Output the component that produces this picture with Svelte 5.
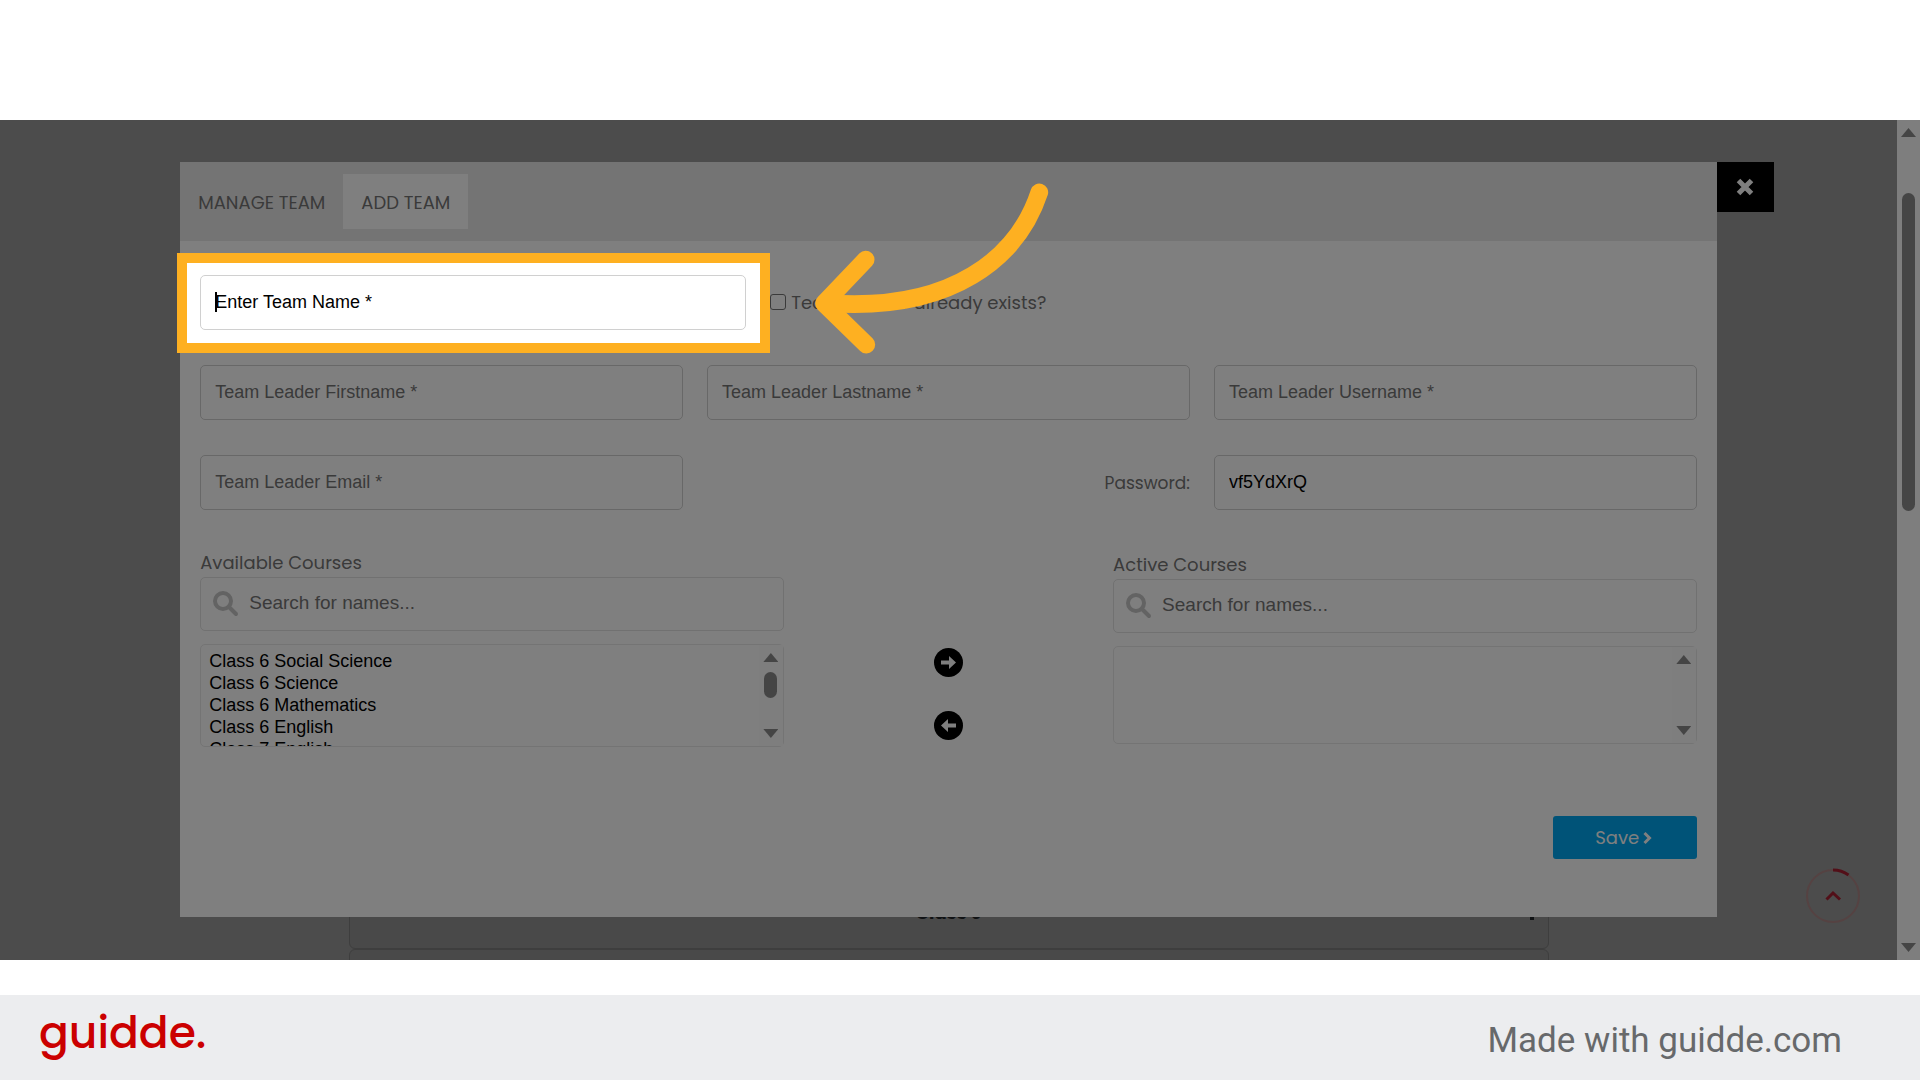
<script>
	let tab = 'add';
	let teamName = '';
	let leaderExists = false;
	let firstname = '';
	let lastname = '';
	let username = '';
	let email = '';
	let password = 'vf5YdXrQ';
	let searchAvailable = '';
	let searchActive = '';

	let available = [
		'Class 6 Social Science',
		'Class 6 Science',
		'Class 6 Mathematics',
		'Class 6 English',
		'Class 7 English',
		'Class 7 Science'
	];
	let active = [];
	let picked = [];
	let dropped = [];

	function match(list, term) {
		return list.filter((name) => name.toLowerCase().includes(term.toLowerCase()));
	}

	function add() {
		active = [...active, ...picked];
		available = available.filter((name) => !picked.includes(name));
		picked = [];
	}

	function remove() {
		available = [...available, ...dropped];
		active = active.filter((name) => !dropped.includes(name));
		dropped = [];
	}
</script>

<main>
	<section class="stage">
		<div class="page">
			<div class="accordion">
				<div class="item"><span>Class 9</span><i></i></div>
				<div class="item"></div>
			</div>

			<button class="to-top" aria-label="Back to top">
				<svg viewBox="0 0 56 56">
					<circle cx="28" cy="28" r="26" fill="none" stroke="#aa8484" stroke-width="2" />
					<path d="M28 2a26 26 0 0 1 15.500 5" fill="none" stroke="#a51f30" stroke-width="3" />
					<path d="M21.500 31.500l6.500-6.500l7 6.500" fill="none" stroke="#a51f30" stroke-width="3" />
				</svg>
			</button>

			<div class="modal">
				<nav>
					<button class:active={tab === 'manage'} on:click={() => (tab = 'manage')}>MANAGE TEAM</button>
					<button class:active={tab === 'add'} on:click={() => (tab = 'add')}>ADD TEAM</button>
				</nav>
				<button class="close" aria-label="Close">
					<svg viewBox="0 0 18 18">
						<path d="M2.500 2.500l13 13M15.500 2.500l-13 13" stroke="#fff" stroke-width="5" />
					</svg>
				</button>

				<form on:submit|preventDefault>
					<div class="name-row">
						<div class="team-name">
							<input type="text" placeholder="Enter Team Name *" aria-label="Enter Team Name" bind:value={teamName} />
							<span class="caret"></span>
							<div class="spotlight"></div>
							<svg class="pointer" viewBox="0 0 702 516">
								<path d="M673 28C610 220 415 390 30 360" />
								<path d="M152 230L27 361L154 485" />
							</svg>
						</div>
						<label class="check">
							<input type="checkbox" bind:checked={leaderExists} />
							Team Leader already exists?
						</label>
					</div>

					<div class="row">
						<input type="text" placeholder="Team Leader Firstname *" aria-label="Team Leader Firstname" bind:value={firstname} />
						<input type="text" placeholder="Team Leader Lastname *" aria-label="Team Leader Lastname" bind:value={lastname} />
						<input type="text" placeholder="Team Leader Username *" aria-label="Team Leader Username" bind:value={username} />
					</div>

					<div class="row">
						<input type="text" placeholder="Team Leader Email *" aria-label="Team Leader Email" bind:value={email} />
						<label class="password" for="password">Password:</label>
						<input type="text" id="password" bind:value={password} />
					</div>

					<div class="courses">
						<div class="column">
							<label for="available">Available Courses</label>
							<div class="search">
								<svg viewBox="0 0 26 26">
									<circle cx="10" cy="10" r="8" />
									<path d="M16 16l7 7" />
								</svg>
								<input type="text" placeholder="Search for names..." aria-label="Search available courses" bind:value={searchAvailable} />
							</div>
							<div class="list">
								<select id="available" multiple bind:value={picked}>
									{#each match(available, searchAvailable) as name}
										<option>{name}</option>
									{/each}
								</select>
								<div class="bar">
									<i class="up"></i>
									<i class="thumb"></i>
									<i class="down"></i>
								</div>
							</div>
						</div>

						<div class="move">
							<button type="button" aria-label="Add course" on:click={add}>
								<svg viewBox="0 0 29 29">
									<circle cx="14.500" cy="14.500" r="14.500" />
									<path d="M7 12.500h8V8l7 6.500l-7 6.500v-4.500H7z" />
								</svg>
							</button>
							<button type="button" aria-label="Remove course" on:click={remove}>
								<svg viewBox="0 0 29 29">
									<circle cx="14.500" cy="14.500" r="14.500" />
									<path d="M22 12.500h-8V8l-7 6.500l7 6.500v-4.500h8z" />
								</svg>
							</button>
						</div>

						<div class="column right">
							<label for="active">Active Courses</label>
							<div class="search">
								<svg viewBox="0 0 26 26">
									<circle cx="10" cy="10" r="8" />
									<path d="M16 16l7 7" />
								</svg>
								<input type="text" placeholder="Search for names..." aria-label="Search active courses" bind:value={searchActive} />
							</div>
							<div class="list">
								<select id="active" multiple bind:value={dropped}>
									{#each match(active, searchActive) as name}
										<option>{name}</option>
									{/each}
								</select>
								<div class="bar">
									<i class="up"></i>
									<i class="down"></i>
								</div>
							</div>
						</div>
					</div>

					<button class="save">
						Save
						<svg viewBox="0 0 9 14">
							<path d="M1.500 2L6.500 7l-5 5" fill="none" stroke="#fff" stroke-width="3" />
						</svg>
					</button>
				</form>
			</div>
		</div>

		<div class="scrollbar">
			<i class="up"></i>
			<i class="thumb"></i>
			<i class="down"></i>
		</div>
	</section>

	<footer>
		<span class="logo">guidde.</span>
		<span class="made">Made with guidde.com</span>
	</footer>
</main>

<style>
	:global(body) {
		margin: 0;
		background: #fff;
	}
	main {
		display: flex;
		flex-direction: column;
		min-height: 100vh;
		font-family: Poppins, Inter, sans-serif;
		font-size: 18px;
		color: #757575;
	}
	main * {
		box-sizing: border-box;
	}
	button {
		padding: 0;
		border: none;
		background: none;
		font: inherit;
		color: inherit;
		cursor: pointer;
	}
	svg {
		display: block;
	}

	.stage {
		position: relative;
		display: flex;
		flex: 1;
		margin: 120px 0 35px;
		overflow: hidden;
	}
	.page {
		position: relative;
		flex: 1;
		padding: 42px 0 43px;
		background: #989898;
	}
	.accordion {
		position: absolute;
		left: 0;
		right: 0;
		bottom: -63px;
		width: 1200px;
		margin: 0 auto;
	}
	.item {
		display: flex;
		align-items: center;
		justify-content: center;
		position: relative;
		height: 74px;
		border: 1px solid #7c7c7c;
		border-radius: 6px;
		background: #929292;
		color: #212529;
		font-weight: 700;
	}
	.item i {
		position: absolute;
		right: 14px;
		width: 4px;
		height: 16px;
		background: #212529;
	}
	.to-top {
		position: absolute;
		right: 36px;
		bottom: 36px;
		width: 56px;
		height: 56px;
	}

	.modal {
		position: relative;
		z-index: 2;
		width: 81%;
		margin: 0 auto;
		background: #fff;
	}
	nav {
		display: flex;
		padding: 12px 0;
		background: #e9e9e9;
	}
	nav button {
		height: 55px;
		padding: 2px 18px 0;
	}
	nav .active {
		background: #fff;
	}
	.close {
		position: absolute;
		top: 0;
		left: 100%;
		display: flex;
		align-items: center;
		justify-content: center;
		width: 57px;
		height: 50px;
		background: #000;
	}
	.close svg {
		width: 18px;
	}

	form {
		display: flex;
		flex-direction: column;
		gap: 35px;
		padding: 34px 20px 58px;
	}
	input[type='text'] {
		width: 100%;
		min-width: 0;
		height: 55px;
		padding: 0 14px;
		border: 1px solid #d0d0d0;
		border-radius: 5px;
		background: #fff;
		font-family: 'Liberation Sans', Arial, sans-serif;
		font-size: 18px;
		color: #000;
		outline: none;
	}
	input::placeholder {
		color: #757575;
		opacity: 1;
	}
	.name-row {
		display: flex;
		align-items: center;
		gap: 24px;
	}
	.team-name {
		position: relative;
		width: 546px;
	}
	.team-name input {
		display: block;
	}
	.team-name input::placeholder {
		color: #000;
	}
	.caret {
		position: absolute;
		top: 17px;
		left: 15px;
		width: 2px;
		height: 20px;
		background: #000;
	}
	/* dims everything in the stage except the field inside it */
	.spotlight {
		position: absolute;
		z-index: 3;
		inset: -22px -24px -23px -23px;
		border: 10px solid #feb021;
		box-shadow: 0 0 0 3000px rgba(0, 0, 0, 0.5);
		pointer-events: none;
	}
	.pointer {
		position: absolute;
		z-index: 4;
		top: -92px;
		left: 615px;
		width: 234px;
		height: 172px;
		pointer-events: none;
	}
	.pointer path {
		fill: none;
		stroke: #feb021;
		stroke-width: 53;
		stroke-linecap: round;
		stroke-linejoin: round;
	}
	.check {
		display: flex;
		align-items: center;
		gap: 5px;
	}
	.check input {
		appearance: none;
		width: 16px;
		height: 16px;
		margin: 0 0 2px;
		border: 1px solid #757575;
		border-radius: 3px;
	}
	.check input:checked {
		background: #757575;
	}
	.row {
		display: grid;
		grid-template-columns: repeat(3, 1fr);
		gap: 24px;
		align-items: center;
	}
	.password {
		font-size: 17px;
		text-align: right;
	}

	.courses {
		display: grid;
		grid-template-columns: 39fr 22fr 39fr;
		padding-top: 4px;
	}
	.column label {
		display: block;
		height: 28px;
		line-height: 28px;
	}
	.right {
		padding-top: 2px;
	}
	.search {
		display: flex;
		align-items: center;
		gap: 10px;
		height: 54px;
		margin-bottom: 13px;
		padding-left: 12px;
		border: 1px solid #e2e2e2;
		border-radius: 5px;
	}
	.search svg {
		flex: none;
		width: 26px;
		fill: none;
		stroke: #c6c6c6;
		stroke-width: 4;
		stroke-linecap: round;
	}
	.search input[type='text'] {
		height: 100%;
		padding: 0 0 2px;
		border: none;
		background: none;
		font-size: 19px;
	}
	.list {
		display: flex;
		height: 103px;
		border: 1px solid #e9e9e9;
		border-radius: 5px;
	}
	.right .list {
		height: 98px;
	}
	select {
		flex: 1;
		min-width: 0;
		height: 100%;
		padding: 6px 8px 0;
		border: none;
		background: none;
		overflow: hidden;
		outline: none;
		font-family: 'Liberation Sans', Arial, sans-serif;
		font-size: 18px;
		color: #000;
	}
	option {
		height: 22px;
		padding: 0;
		line-height: 22px;
	}
	.bar,
	.scrollbar {
		display: flex;
		flex-direction: column;
		align-items: center;
		width: 24px;
		padding: 8px 0;
		background: #fcfcfc;
	}
	.up,
	.down {
		width: 15px;
		height: 9px;
		background: #8b8b8b;
		clip-path: polygon(50% 0, 100% 100%, 0 100%);
	}
	.down {
		margin-top: auto;
		clip-path: polygon(0 0, 100% 0, 50% 100%);
	}
	.thumb {
		width: 13px;
		height: 26px;
		margin-top: 10px;
		border-radius: 7px;
		background: #8b8b8b;
	}
	.scrollbar {
		width: 23px;
	}
	.scrollbar .thumb {
		height: 38.6%;
		margin-top: 56px;
	}
	.move {
		display: flex;
		flex-direction: column;
		align-items: center;
		gap: 34px;
		padding-top: 99px;
	}
	.move button {
		width: 29px;
		height: 29px;
	}
	.move path {
		fill: #fff;
	}
	.save {
		display: flex;
		align-items: center;
		justify-content: center;
		gap: 4px;
		align-self: flex-end;
		width: 144px;
		height: 43px;
		margin-top: 34px;
		padding-right: 2px;
		border-radius: 3px;
		background: #00a6f0;
		color: #fff;
	}
	.save svg {
		width: 9px;
	}

	footer {
		display: flex;
		align-items: center;
		justify-content: space-between;
		height: 85px;
		padding: 0 78px 0 39px;
		background: #ecedef;
	}
	.logo {
		font-family: Poppins, Inter, sans-serif;
		font-size: 44px;
		font-weight: 500;
		line-height: 68px;
		padding-bottom: 10px;
		color: #cb0000;
	}
	.made {
		padding-top: 6px;
		font-family: Roboto, sans-serif;
		font-size: 35px;
		color: #67696b;
	}
</style>
